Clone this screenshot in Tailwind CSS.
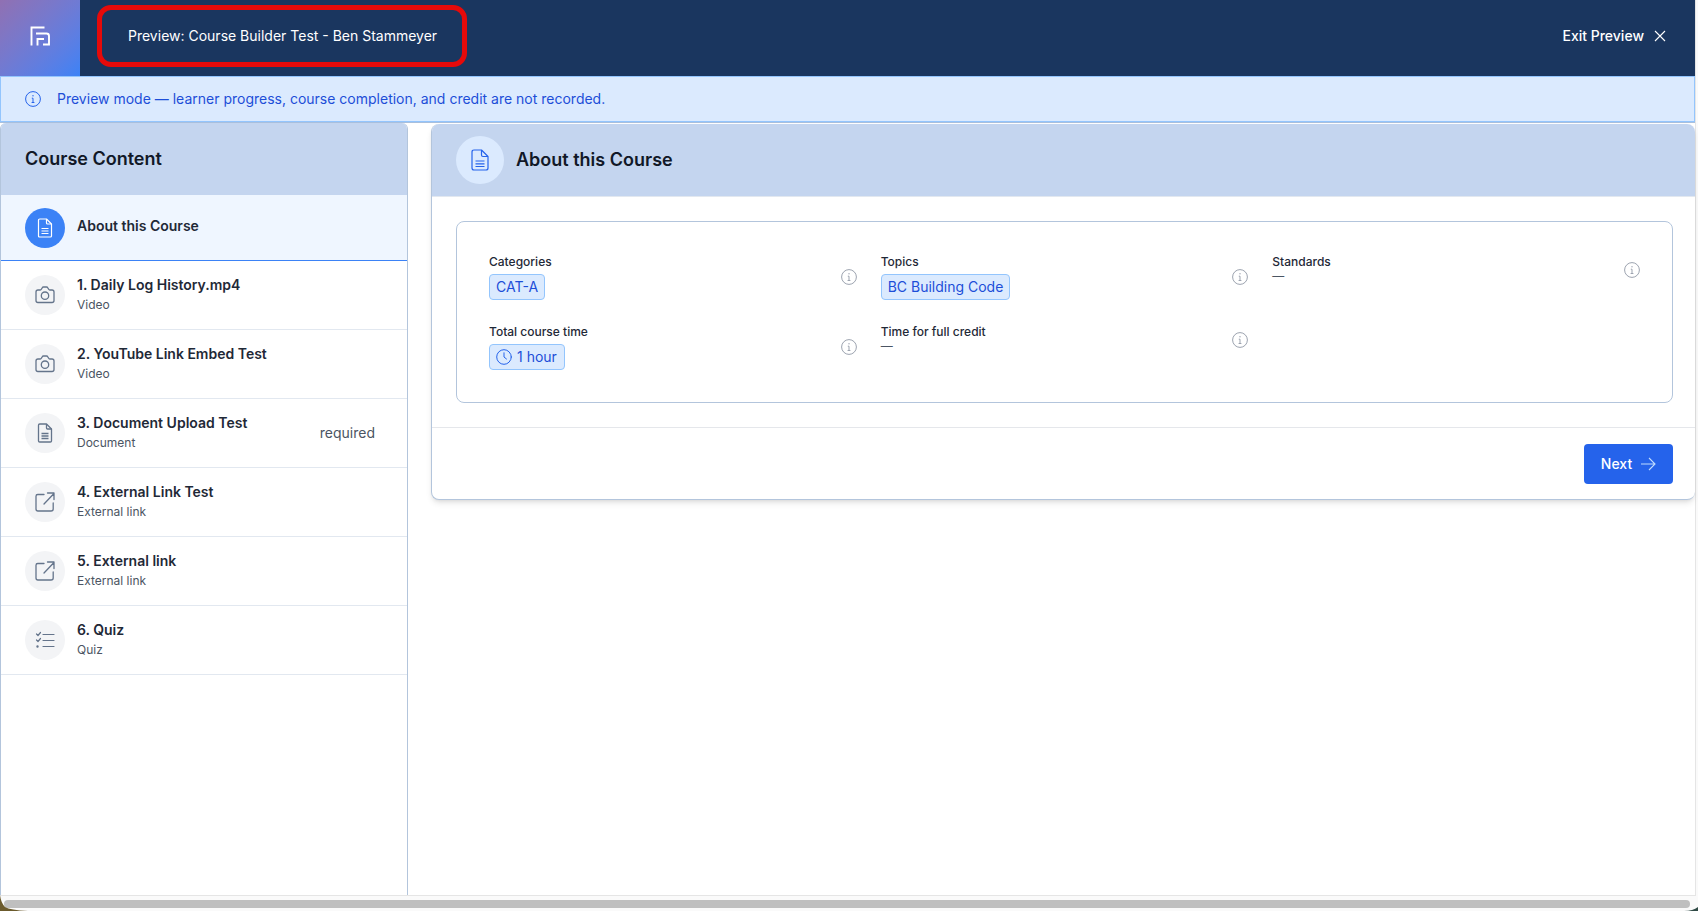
<!DOCTYPE html>
<html lang="en">
<head>
<meta charset="utf-8">
<title>Preview</title>
<script src="https://cdn.jsdelivr.net/npm/@tailwindcss/browser@4"></script>
</head>
<body class="bg-[#fafafa] font-['Inter','Liberation_Sans',sans-serif] text-[#111827] overflow-hidden">
<div class="relative w-[1698px] h-[911px] overflow-hidden flex flex-col">
  <div class="w-[1696px] h-[896px] flex flex-col bg-white border-r border-b border-[#e5e5e5] shrink-0">
    <header class="h-[76px] bg-[#1a365f] flex items-center shrink-0">
      <div class="w-[80px] h-full bg-gradient-to-br from-[#9070b2] to-[#3b82f6] flex items-center justify-center">
        <svg class="w-[20px] h-[20px] mb-[4px]" viewBox="0 0 20 20" fill="none" stroke="white" stroke-width="1.9"><path d="M1.5 19.5V1.5H14.5"/><path d="M6 7.5H16.5Q19 7.5 19 10V18.5H13"/><path d="M7.5 19.5V13H14"/></svg>
      </div>
      <div class="ml-[48px] mb-[4px] text-sm font-normal text-white">Preview: Course Builder Test - Ben Stammeyer</div>
      <div class="ml-auto mr-[29px] mb-[4px] flex items-center gap-[10px] text-sm font-medium text-white">
        <span>Exit Preview</span>
        <svg class="w-[12px] h-[12px]" viewBox="0 0 12 12" fill="none" stroke="white" stroke-width="1.1"><path d="M1 1L11 11M11 1L1 11"/></svg>
      </div>
    </header>
    <div class="h-[46px] bg-[#dbeafe] border border-[#93c5fd] flex items-center pl-[24px] gap-[16px] text-sm text-[#1d4ed8] shrink-0">
      <svg class="w-[16px] h-[16px] text-[#2563eb]" viewBox="0 0 16 16" fill="none" stroke="currentColor" stroke-width="1"><circle cx="8" cy="8" r="7.4"/><path d="M6.8 7.2H8V11.5M6.6 11.5H9.4"/><circle cx="8" cy="4.8" r=".7" fill="currentColor" stroke="none"/></svg>
      <span>Preview mode — learner progress, course completion, and credit are not recorded.</span>
    </div>
    <div class="flex-1 flex min-h-0 border-t border-[#a9bfdc]">
      <aside class="w-[408px] shrink-0 border-x border-[#b3c5dc] flex flex-col rounded-t-[6px] overflow-hidden">
        <div class="h-[72px] bg-[#c4d5ef] flex items-center pl-[24px] text-lg font-semibold text-[#111827] shrink-0">Course Content</div>
        <div class="h-[66px] bg-[#eff6ff] border-b border-[#3b82f6] flex items-center pl-[24px] gap-[12px] shrink-0">
          <div class="w-[40px] h-[40px] rounded-full bg-[#3b82f6] flex items-center justify-center">
            <svg class="w-[24px] h-[24px]" viewBox="0 0 24 24" fill="none" stroke="white" stroke-width="1.2" stroke-linejoin="round"><path d="M5.5 4.2Q5.5 3 6.7 3H13.5L18.5 8V20Q18.5 21 17.3 21H6.7Q5.5 21 5.5 20Z"/><path d="M13.5 3V7Q13.5 8 14.5 8H18.5M8.5 12.5H15.5M8.5 15H15.5M8.5 17.5H15.5"/></svg>
          </div>
          <div class="mb-[4px] text-sm font-semibold text-[#1f2937]">About this Course</div>
        </div>

        <div class="h-[69px] border-b border-[#e2e8f0] flex items-start pt-[14px] pl-[24px] gap-[12px] shrink-0">
          <div class="w-[40px] h-[40px] rounded-full bg-[#f3f4f6] flex items-center justify-center text-[#64748b]">
            <svg class="w-[24px] h-[24px]" viewBox="0 0 24 24" fill="none" stroke="currentColor" stroke-width="1.3" stroke-linejoin="round"><path d="M3 9Q3 7 5 7H7.2Q8 7 8.5 6L9.2 4.8Q9.6 4 10.5 4H13.5Q14.4 4 14.8 4.8L15.5 6Q16 7 16.8 7H19Q21 7 21 9V17.5Q21 19.5 19 19.5H5Q3 19.5 3 17.5Z"/><circle cx="12" cy="12.7" r="3.7"/></svg>
          </div>
          <div><div class="text-sm leading-5 font-semibold text-[#1f2937]">1. Daily Log History.mp4</div><div class="mt-[2px] text-xs text-[#4b5563]">Video</div></div>
        </div>

        <div class="h-[69px] border-b border-[#e2e8f0] flex items-start pt-[14px] pl-[24px] gap-[12px] shrink-0">
          <div class="w-[40px] h-[40px] rounded-full bg-[#f3f4f6] flex items-center justify-center text-[#64748b]">
            <svg class="w-[24px] h-[24px]" viewBox="0 0 24 24" fill="none" stroke="currentColor" stroke-width="1.3" stroke-linejoin="round"><path d="M3 9Q3 7 5 7H7.2Q8 7 8.5 6L9.2 4.8Q9.6 4 10.5 4H13.5Q14.4 4 14.8 4.8L15.5 6Q16 7 16.8 7H19Q21 7 21 9V17.5Q21 19.5 19 19.5H5Q3 19.5 3 17.5Z"/><circle cx="12" cy="12.7" r="3.7"/></svg>
          </div>
          <div><div class="text-sm leading-5 font-semibold text-[#1f2937]">2. YouTube Link Embed Test</div><div class="mt-[2px] text-xs text-[#4b5563]">Video</div></div>
        </div>

        <div class="h-[69px] border-b border-[#e2e8f0] flex items-start pt-[14px] pl-[24px] pr-[32px] gap-[12px] shrink-0">
          <div class="w-[40px] h-[40px] rounded-full bg-[#f3f4f6] flex items-center justify-center text-[#64748b]">
            <svg class="w-[24px] h-[24px]" viewBox="0 0 24 24" fill="none" stroke="currentColor" stroke-width="1.3" stroke-linejoin="round"><path d="M5.5 4.2Q5.5 3 6.7 3H13.5L18.5 8V20Q18.5 21 17.3 21H6.7Q5.5 21 5.5 20Z"/><path d="M13.5 3V7Q13.5 8 14.5 8H18.5M8.5 12.5H15.5M8.5 15H15.5M8.5 17.5H15.5"/></svg>
          </div>
          <div><div class="text-sm leading-5 font-semibold text-[#1f2937]">3. Document Upload Test</div><div class="mt-[2px] text-xs text-[#4b5563]">Document</div></div>
          <div class="ml-auto mt-[10px] text-sm leading-5 text-[#4b5563]">required</div>
        </div>

        <div class="h-[69px] border-b border-[#e2e8f0] flex items-start pt-[14px] pl-[24px] gap-[12px] shrink-0">
          <div class="w-[40px] h-[40px] rounded-full bg-[#f3f4f6] flex items-center justify-center text-[#64748b]">
            <svg class="w-[24px] h-[24px]" viewBox="0 0 24 24" fill="none" stroke="currentColor" stroke-width="1.3" stroke-linejoin="round" stroke-linecap="round"><path d="M11 4.5H4.8Q3 4.5 3 6.3V19Q3 21 5 21H18Q20.2 21 20.2 19V13"/><path d="M11 14L21 3.5M14.5 3H21V9.5"/></svg>
          </div>
          <div><div class="text-sm leading-5 font-semibold text-[#1f2937]">4. External Link Test</div><div class="mt-[2px] text-xs text-[#4b5563]">External link</div></div>
        </div>

        <div class="h-[69px] border-b border-[#e2e8f0] flex items-start pt-[14px] pl-[24px] gap-[12px] shrink-0">
          <div class="w-[40px] h-[40px] rounded-full bg-[#f3f4f6] flex items-center justify-center text-[#64748b]">
            <svg class="w-[24px] h-[24px]" viewBox="0 0 24 24" fill="none" stroke="currentColor" stroke-width="1.3" stroke-linejoin="round" stroke-linecap="round"><path d="M11 4.5H4.8Q3 4.5 3 6.3V19Q3 21 5 21H18Q20.2 21 20.2 19V13"/><path d="M11 14L21 3.5M14.5 3H21V9.5"/></svg>
          </div>
          <div><div class="text-sm leading-5 font-semibold text-[#1f2937]">5. External link</div><div class="mt-[2px] text-xs text-[#4b5563]">External link</div></div>
        </div>

        <div class="h-[69px] border-b border-[#e2e8f0] flex items-start pt-[14px] pl-[24px] gap-[12px] shrink-0">
          <div class="w-[40px] h-[40px] rounded-full bg-[#f3f4f6] flex items-center justify-center text-[#64748b]">
            <svg class="w-[24px] h-[24px]" viewBox="0 0 24 24" fill="none" stroke="currentColor" stroke-width="1.2" stroke-linecap="round" stroke-linejoin="round"><path d="M10 6.5H21M10 12.5H21M10 18.5H21"/><path d="M3.5 6L5 7.5L7.5 4.5M3.5 12L5 13.5L7.5 10.5"/><circle cx="4.5" cy="18.5" r=".6" fill="currentColor"/></svg>
          </div>
          <div><div class="text-sm leading-5 font-semibold text-[#1f2937]">6. Quiz</div><div class="mt-[2px] text-xs text-[#4b5563]">Quiz</div></div>
        </div>
      </aside>

      <main class="flex-1 min-w-0 pl-[23px] pt-[1px]">
        <div class="bg-white border-l border-b border-[#b3c5dc] rounded-lg overflow-hidden shadow-md">
          <div class="h-[73px] bg-[#c4d5ef] border-b border-[#e2e8f0] flex items-center pl-[24px] gap-[12px]">
            <div class="w-[48px] h-[48px] rounded-full bg-[#dbeafe] flex items-center justify-center text-[#2563eb]">
              <svg class="w-[24px] h-[24px]" viewBox="0 0 24 24" fill="none" stroke="currentColor" stroke-width="1.2" stroke-linejoin="round"><path d="M4 4Q4 2 6 2H13.5L20 8.5V20Q20 22 18 22H6Q4 22 4 20Z"/><path d="M13.5 2V7Q13.5 8.5 15 8.5H20M7.5 13H16.5M7.5 15.8H16.5M7.5 18.5H16.5"/></svg>
            </div>
            <div class="text-lg font-semibold text-[#111827]">About this Course</div>
          </div>
          <div class="pl-[24px] pr-[22px] pt-[24px] pb-[24px] border-b border-[#e5e7eb]">
            <div class="border border-[#b3c5dc] rounded-lg pt-[32px] px-[32px] pb-[31px] grid grid-cols-3 gap-x-[24px] gap-y-[24px] items-start">
              <div class="flex items-center">
                <div class="flex-1"><div class="text-xs font-medium leading-4 text-[#1f2937]">Categories</div><div class="mt-[4px] inline-flex items-center h-[26px] px-[6px] rounded-[4px] bg-[#dbeafe] border border-[#93c5fd] text-sm text-[#1d4ed8]">CAT-A</div></div>
                <svg class="w-[16px] h-[16px] text-[#9ca3af]" viewBox="0 0 16 16" fill="none" stroke="currentColor" stroke-width="1"><circle cx="8" cy="8" r="7.4"/><path d="M6.8 7.2H8V11.5M6.6 11.5H9.4"/><circle cx="8" cy="4.8" r=".7" fill="currentColor" stroke="none"/></svg>
              </div>
              <div class="flex items-center">
                <div class="flex-1"><div class="text-xs font-medium leading-4 text-[#1f2937]">Topics</div><div class="mt-[4px] inline-flex items-center h-[26px] px-[6px] rounded-[4px] bg-[#dbeafe] border border-[#93c5fd] text-sm text-[#1d4ed8]">BC Building Code</div></div>
                <svg class="w-[16px] h-[16px] text-[#9ca3af]" viewBox="0 0 16 16" fill="none" stroke="currentColor" stroke-width="1"><circle cx="8" cy="8" r="7.4"/><path d="M6.8 7.2H8V11.5M6.6 11.5H9.4"/><circle cx="8" cy="4.8" r=".7" fill="currentColor" stroke="none"/></svg>
              </div>
              <div class="flex items-center">
                <div class="flex-1"><div class="text-xs font-medium leading-4 text-[#1f2937]">Standards</div><div class="-mt-[2px] pb-[2px] text-xs leading-4 text-[#4b5563]">—</div></div>
                <svg class="w-[16px] h-[16px] text-[#9ca3af]" viewBox="0 0 16 16" fill="none" stroke="currentColor" stroke-width="1"><circle cx="8" cy="8" r="7.4"/><path d="M6.8 7.2H8V11.5M6.6 11.5H9.4"/><circle cx="8" cy="4.8" r=".7" fill="currentColor" stroke="none"/></svg>
              </div>
              <div class="flex items-center">
                <div class="flex-1"><div class="text-xs font-medium leading-4 text-[#1f2937]">Total course time</div><div class="mt-[4px] inline-flex items-center gap-[5px] h-[26px] pl-[6px] pr-[7px] rounded-[4px] bg-[#dbeafe] border border-[#93c5fd] text-sm text-[#1d4ed8]"><svg class="w-[16px] h-[16px] text-[#2563eb]" viewBox="0 0 16 16" fill="none" stroke="currentColor" stroke-width="1" stroke-linecap="round"><circle cx="8" cy="8" r="7.3"/><path d="M8 3.8V8L10.5 10"/></svg>1 hour</div></div>
                <svg class="w-[16px] h-[16px] mb-[2px] text-[#9ca3af]" viewBox="0 0 16 16" fill="none" stroke="currentColor" stroke-width="1"><circle cx="8" cy="8" r="7.4"/><path d="M6.8 7.2H8V11.5M6.6 11.5H9.4"/><circle cx="8" cy="4.8" r=".7" fill="currentColor" stroke="none"/></svg>
              </div>
              <div class="flex items-center">
                <div class="flex-1"><div class="text-xs font-medium leading-4 text-[#1f2937]">Time for full credit</div><div class="-mt-[2px] pb-[2px] text-xs leading-4 text-[#4b5563]">—</div></div>
                <svg class="w-[16px] h-[16px] text-[#9ca3af]" viewBox="0 0 16 16" fill="none" stroke="currentColor" stroke-width="1"><circle cx="8" cy="8" r="7.4"/><path d="M6.8 7.2H8V11.5M6.6 11.5H9.4"/><circle cx="8" cy="4.8" r=".7" fill="currentColor" stroke="none"/></svg>
              </div>
            </div>
          </div>
          <div class="h-[71px] flex items-center justify-end pr-[22px] pt-[1px]">
            <div class="h-[40px] w-[89px] rounded-[4px] bg-[#2563eb] text-white text-sm font-medium flex items-center justify-center gap-[8px]">
              <span>Next</span>
              <svg class="w-[16px] h-[16px] text-[#bfdbfe]" viewBox="0 0 16 16" fill="none" stroke="currentColor" stroke-width="1.1"><path d="M1 8H15M9 2L15 8L9 14"/></svg>
            </div>
          </div>
        </div>
      </main>
    </div>
  </div>
  <div class="flex-1 pt-[4px] pl-[4px] pr-[8px]">
    <div class="h-[8px] rounded-full bg-[#bfbfbf]"></div>
  </div>
  <div class="absolute left-[97px] top-[5px] w-[370px] h-[62px] border-[5px] border-[#e60a0a] rounded-[14px]"></div>
  <svg class="absolute left-0 bottom-0 w-[28px] h-[16px]" viewBox="0 0 28 16"><path d="M0 0V16H28Q10 15 5 12Q1 8 0 0Z" fill="#6b5a2c"/></svg>
  <svg class="absolute right-0 bottom-0 w-[14px] h-[4px]" viewBox="0 0 14 4"><path d="M14 0V4H0Q9 4 14 0Z" fill="#2f4a45"/></svg>
</div>
</body>
</html>
